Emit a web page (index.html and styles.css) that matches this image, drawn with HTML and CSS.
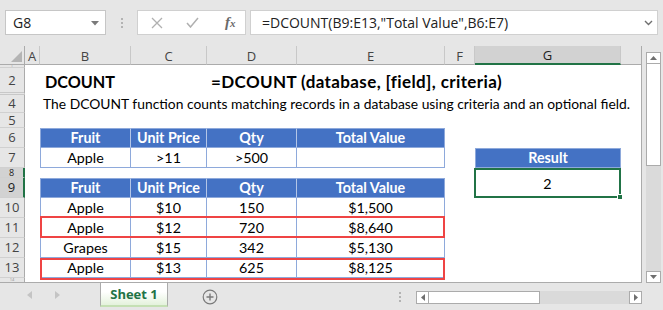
FILE: index.html
```html
<!DOCTYPE html>
<html>
<head>
<meta charset="utf-8">
<link rel="stylesheet" href="styles.css">
</head>
<body>
<div class="app">
  <div class="fbar">
    <div class="namebox">
      <span class="nb-text">G8</span>
      <svg class="nb-caret" width="8" height="5" viewBox="0 0 8 5"><path d="M0 0H8L4 4.5Z" fill="#7a7a7a"/></svg>
    </div>
    <div class="grip"><i></i><i></i><i></i></div>
    <div class="fbtns">
      <svg width="12" height="12" viewBox="0 0 12 12"><path d="M1 1L11 11M11 1L1 11" stroke="#b0b0b0" stroke-width="1.3" fill="none"/></svg>
      <svg width="13" height="11" viewBox="0 0 13 11"><path d="M1 6L4.5 10L12 1" stroke="#b0b0b0" stroke-width="1.5" fill="none"/></svg>
      <span class="fx">f<small>x</small></span>
    </div>
    <div class="finput">
      <span class="ftext">=DCOUNT(B9:E13,"Total Value",B6:E7)</span>
      <svg class="fchev" width="9" height="6" viewBox="0 0 9 6"><path d="M1 1L4.5 4.5L8 1" stroke="#6f6f6f" stroke-width="1.4" fill="none"/></svg>
    </div>
  </div>

  <div class="main">
    <div class="sheet">
      <div class="ch corner"><svg width="11" height="11" viewBox="0 0 11 11"><path d="M11 0V11H0Z" fill="#b4b4b4"/></svg></div>
      <div class="ch">A</div>
      <div class="ch">B</div>
      <div class="ch">C</div>
      <div class="ch">D</div>
      <div class="ch">E</div>
      <div class="ch">F</div>
      <div class="ch sel">G</div>
      <div class="ch blank"></div>

      <div class="rh r1">1</div>
      <div class="rh r2">2</div>
      <div class="rh r4">4</div>
      <div class="rh r5">5</div>
      <div class="rh r6">6</div>
      <div class="rh r7">7</div>
      <div class="rh r8 sel">8</div>
      <div class="rh r9 sel">9</div>
      <div class="rh r10">10</div>
      <div class="rh r11">11</div>
      <div class="rh r12">12</div>
      <div class="rh r13">13</div>
      <div class="rh r14">14</div>

      <div class="title">DCOUNT</div>
      <div class="syntax">=DCOUNT (database, [field], criteria)</div>
      <div class="desc">The DCOUNT function counts matching records in a database using criteria and an optional field.</div>

      <!-- criteria table -->
      <div class="th first cB r6">Fruit</div>
      <div class="th cC r6">Unit Price</div>
      <div class="th cD r6">Qty</div>
      <div class="th cE r6">Total Value</div>
      <div class="td first cB r7">Apple</div>
      <div class="td cC r7">&gt;11</div>
      <div class="td cD r7">&gt;500</div>
      <div class="td cE r7"></div>

      <!-- database table -->
      <div class="th first cB r9">Fruit</div>
      <div class="th cC r9">Unit Price</div>
      <div class="th cD r9">Qty</div>
      <div class="th cE r9">Total Value</div>

      <div class="td first cB r10">Apple</div>
      <div class="td cC r10">$10</div>
      <div class="td cD r10">150</div>
      <div class="td cE r10">$1,500</div>

      <div class="td first cB r11">Apple</div>
      <div class="td cC r11">$12</div>
      <div class="td cD r11">720</div>
      <div class="td cE r11">$8,640</div>

      <div class="td first cB r12">Grapes</div>
      <div class="td cC r12">$15</div>
      <div class="td cD r12">342</div>
      <div class="td cE r12">$5,130</div>

      <div class="td first cB r13">Apple</div>
      <div class="td cC r13">$13</div>
      <div class="td cD r13">625</div>
      <div class="td cE r13">$8,125</div>

      <div class="hl hl11"></div>
      <div class="hl hl13"></div>

      <!-- result -->
      <div class="th first cG r7 res-h">Result</div>
      <div class="res-v">2<span class="handle"></span></div>
    </div>

    <div class="vscroll">
      <div class="sbtn up"><svg width="7" height="4" viewBox="0 0 7 4"><path d="M0 4H7L3.5 0Z" fill="#6f6f6f"/></svg></div>
      <div class="vthumb"></div>
      <div class="vtrack"></div>
      <div class="sbtn down"><svg width="7" height="4" viewBox="0 0 7 4"><path d="M0 0H7L3.5 4Z" fill="#6f6f6f"/></svg></div>
    </div>
  </div>

  <div class="bottom">
    <div class="tabnav">
      <svg width="5" height="8" viewBox="0 0 5 8"><path d="M5 0V8L0 4Z" fill="#c4c4c4"/></svg>
      <svg width="5" height="8" viewBox="0 0 5 8"><path d="M0 0V8L5 4Z" fill="#c4c4c4"/></svg>
    </div>
    <div class="tab">Sheet 1</div>
    <div class="addsheet">
      <svg width="16" height="16" viewBox="0 0 16 16"><circle cx="8" cy="8" r="6.8" stroke="#7a7a7a" stroke-width="1.2" fill="none"/><path d="M8 4.5V11.5M4.5 8H11.5" stroke="#7a7a7a" stroke-width="1.4"/></svg>
    </div>
    <div class="hgrip"><i></i><i></i><i></i></div>
    <div class="hscroll">
      <div class="sbtn hleft"><svg width="4" height="7" viewBox="0 0 4 7"><path d="M4 0V7L0 3.5Z" fill="#6f6f6f"/></svg></div>
      <div class="hthumb"></div>
      <div class="htrack"></div>
      <div class="sbtn hright"><svg width="4" height="7" viewBox="0 0 4 7"><path d="M0 0V7L4 3.5Z" fill="#6f6f6f"/></svg></div>
    </div>
  </div>
</div>
</body>
</html>
```

FILE: styles.css
```css
* { box-sizing: border-box; }
html, body { margin: 0; padding: 0; }
body { width: 663px; height: 310px; overflow: hidden; background: #e6e6e6; }

.app {
  width: 663px;
  height: 310px;
  display: flex;
  flex-direction: column;
  background: #e6e6e6;
  font-family: "Open Sans", "Noto Sans", sans-serif;
}

/* formula bar */
.fbar {
  height: 46px;
  display: flex;
  align-items: flex-start;
  padding: 10px 5px 0 5px;
}
.namebox {
  width: 101px;
  height: 25px;
  background: #fff;
  border: 1px solid #c6c6c6;
  display: flex;
  align-items: center;
  justify-content: space-between;
  padding: 0 6px 0 7px;
}
.nb-text { font-size: 14px; color: #222; }
.nb-caret { margin-top: 1px; }
.grip {
  width: 31px;
  height: 25px;
  display: flex;
  flex-direction: column;
  align-items: center;
  justify-content: center;
  gap: 2px;
}
.grip i, .hgrip i { display: block; width: 2px; height: 2px; background: #b3b3b3; }
.fbtns {
  width: 109px;
  height: 25px;
  background: #fff;
  border: 1px solid #d0d0d0;
  display: flex;
  align-items: center;
  padding-left: 13px;
}
.fbtns svg:nth-child(1) { margin-right: 23px; }
.fbtns svg:nth-child(2) { margin-right: 26px; }
.fx {
  font-family: "Liberation Serif", "DejaVu Serif", serif;
  font-style: italic;
  font-weight: bold;
  font-size: 15px;
  color: #6a6a6a;
}
.fx small { font-size: 11px; }
.finput {
  margin-left: 4px;
  width: 408px;
  height: 25px;
  background: #fff;
  border: 1px solid #d0d0d0;
  display: flex;
  align-items: center;
  justify-content: space-between;
  padding: 0 4px 0 11px;
}
.ftext { font-size: 14px; color: #222; white-space: nowrap; }

/* main area */
.main {
  height: 237px;
  display: flex;
}
.sheet {
  width: 642px;
  height: 237px;
  background: #fff;
  border-right: 1px solid #ababab;
  border-bottom: 1px solid #ababab;
  display: grid;
  grid-template-columns: 25px 15px 91px 76px 90px 148px 30px 146px 20px;
  grid-template-rows: 19px 3px 27px 18px 15px 20px 20px 10px 20px 20px 20px 20px 20px 4px;
  font-family: "Lato", "Open Sans", sans-serif;
  font-size: 14.3px;
  color: #000;
}

.ch {
  grid-row: 1;
  background: #e6e6e6;
  border-right: 1px solid #c8c8c8;
  border-bottom: 1px solid #ababab;
  display: flex;
  align-items: center;
  justify-content: center;
  font-family: "Open Sans", sans-serif;
  font-size: 13px;
  color: #444;
  padding-top: 1px;
}
.ch.corner { justify-content: flex-end; align-items: flex-end; padding: 0 2px 2px 0; border-right-color: #ababab; }
.ch.blank { border-right: none; }
.ch.sel { background: #d2d2d2; border-bottom: 2px solid #217346; color: #222; }

.rh {
  grid-column: 1;
  background: #e6e6e6;
  border-right: 1px solid #ababab;
  border-bottom: 1px solid #d0d0d0;
  display: flex;
  align-items: center;
  justify-content: center;
  overflow: hidden;
  font-family: "Open Sans", sans-serif;
  font-size: 13px;
  color: #444;
  line-height: 1;
}
.rh.sel { background: #d2d2d2; border-right: 2px solid #217346; color: #222; }
.r1 { grid-row: 2; }
.r2 { grid-row: 3; }
.r4 { grid-row: 4; }
.r5 { grid-row: 5; }
.r6 { grid-row: 6; }
.r7 { grid-row: 7; }
.r8 { grid-row: 8; }
.r9 { grid-row: 9; }
.r10 { grid-row: 10; }
.r11 { grid-row: 11; }
.r12 { grid-row: 12; }
.r13 { grid-row: 13; }
.r14 { grid-row: 14; border-bottom: none; }
.rh.r1 { font-size: 4px; color: #888; }
.rh.r8 { font-size: 9px; }
.rh.r14 { font-size: 4px; color: #888; }
.rh.r2 { border-bottom: 3px double #c8c8c8; }

.cB { grid-column: 3; }
.cC { grid-column: 4; }
.cD { grid-column: 5; }
.cE { grid-column: 6; }
.cG { grid-column: 8; }

.title {
  grid-row: 3;
  grid-column: 3;
  font-weight: bold;
  font-size: 16.2px;
  line-height: 20px;
  padding: 4px 0 0 5px;
  white-space: nowrap;
}
.syntax {
  grid-row: 3;
  grid-column: 5 / 10;
  font-weight: bold;
  font-size: 17px;
  letter-spacing: 0.38px;
  line-height: 20px;
  padding: 4px 0 0 4px;
  white-space: nowrap;
}
.desc {
  grid-row: 4;
  grid-column: 3 / 10;
  font-size: 13.85px;
  line-height: 18px;
  padding-left: 3px;
  white-space: nowrap;
}

.th, .td {
  display: flex;
  align-items: center;
  justify-content: center;
  line-height: 20px;
  white-space: nowrap;
}
.th {
  background: #4472c4;
  color: #fff;
  font-weight: bold;
  border-top: 1px solid #8ea9db;
  border-right: 1px solid #b4c6e7;
  border-bottom: 1px solid #8ea9db;
}
.th.cE { border-right-color: #8ea9db; }
.th.first { border-left: 1px solid #8ea9db; }
.td {
  background: #fff;
  border-right: 1px solid #8ea9db;
  border-bottom: 1px solid #8ea9db;
}
.td.first { border-left: 1px solid #8ea9db; }

.hl {
  grid-column: 3 / 7;
  border: 2px solid #ef4444;
  z-index: 2;
}
.hl11 { grid-row: 11; margin-top: -2px; }
.hl13 { grid-row: 13; margin-bottom: -2px; }

.res-h { border-right-color: #8ea9db; }
.res-v {
  grid-row: 8 / 10;
  grid-column: 8;
  border: 2px solid #217346;
  margin-left: -1px;
  display: flex;
  align-items: center;
  justify-content: center;
  position: relative;
  z-index: 2;
}
.handle {
  position: absolute;
  right: -4px;
  bottom: -4px;
  width: 6px;
  height: 6px;
  background: #217346;
  border: 1px solid #fff;
}

/* vertical scrollbar */
.vscroll {
  width: 21px;
  padding: 6px 2px 0 4px;
  display: flex;
  flex-direction: column;
}
.sbtn {
  background: #fff;
  border: 1px solid #ababab;
  display: flex;
  align-items: center;
  justify-content: center;
  flex: none;
}
.up, .down { height: 12px; }
.vthumb {
  height: 102px;
  background: #fff;
  border: 1px solid #ababab;
  border-top: none;
}
.vtrack { flex: 1; background: #dadada; }

/* bottom bar */
.bottom {
  height: 27px;
  display: flex;
  align-items: flex-start;
}
.tabnav {
  width: 100px;
  height: 24px;
  display: flex;
  align-items: center;
  padding-left: 27px;
  gap: 23px;
}
.tab {
  width: 68px;
  height: 24px;
  background: linear-gradient(#ffffff 40%, #e4f2dc);
  border: 1px solid #ababab;
  border-top: none;
  border-bottom: 2px solid #c5e0b4;
  display: flex;
  align-items: center;
  justify-content: center;
  font-weight: bold;
  font-size: 13px;
  color: #217346;
  padding-bottom: 1px;
}
.addsheet {
  width: 84px;
  height: 27px;
  display: flex;
  align-items: center;
  padding-left: 34px;
}
.hgrip {
  width: 164px;
  height: 27px;
  display: flex;
  flex-direction: column;
  justify-content: center;
  align-items: flex-start;
  padding-left: 147px;
  gap: 2px;
}
.hscroll {
  margin-top: 8px;
  height: 13px;
  display: flex;
}
.hleft, .hright { width: 13px; height: 13px; }
.hthumb {
  width: 111px;
  height: 13px;
  background: #fff;
  border: 1px solid #ababab;
  border-left: none;
}
.htrack { width: 89px; height: 13px; background: #dadada; }
```
